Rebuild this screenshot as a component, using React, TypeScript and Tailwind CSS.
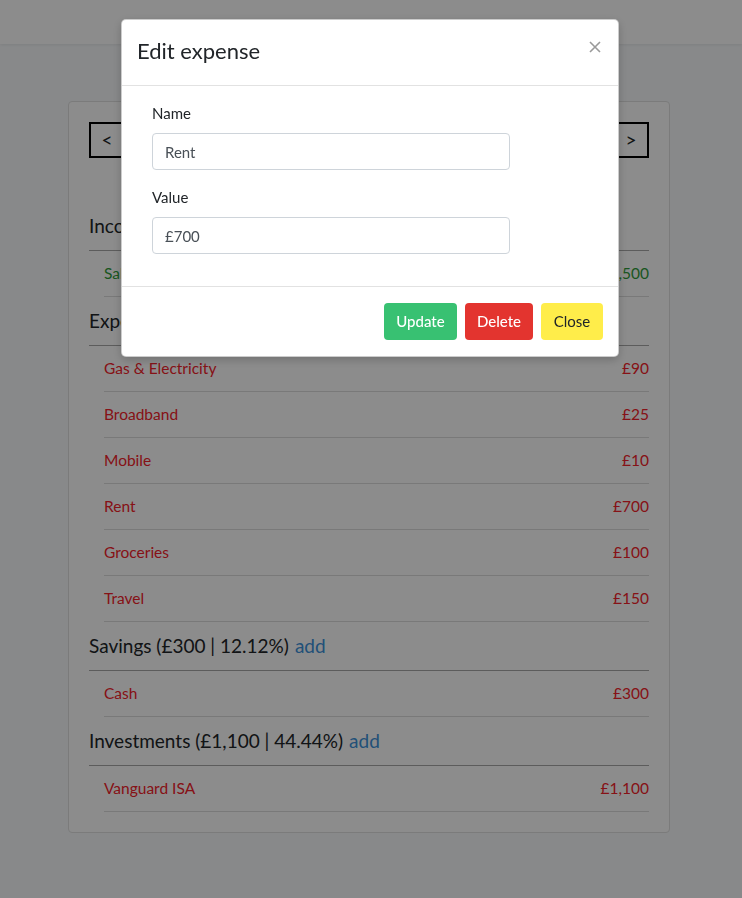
import React from "react";

type Item = { name: string; value: string };

type Section = {
  title: string;
  tone: "income" | "out";
  items: Item[];
};

const sections: Section[] = [
  {
    title: "Income (£2,500)",
    tone: "income",
    items: [{ name: "Salary", value: "£2,500" }],
  },
  {
    title: "Expenses (£1,075 | 43.43%)",
    tone: "out",
    items: [
      { name: "Gas & Electricity", value: "£90" },
      { name: "Broadband", value: "£25" },
      { name: "Mobile", value: "£10" },
      { name: "Rent", value: "£700" },
      { name: "Groceries", value: "£100" },
      { name: "Travel", value: "£150" },
    ],
  },
  {
    title: "Savings (£300 | 12.12%)",
    tone: "out",
    items: [{ name: "Cash", value: "£300" }],
  },
  {
    title: "Investments (£1,100 | 44.44%)",
    tone: "out",
    items: [{ name: "Vanguard ISA", value: "£1,100" }],
  },
];

const SectionBlock = ({ section }: { section: Section }) => {
  return (
    <div>
      <div className="h-[49px] flex items-center border-b border-[#a8a8a8] text-[19px] text-[#212529]">
        <span>{section.title}</span>
        <span className="ml-[6px] text-[#3c92db]">add</span>
      </div>
      {section.items.map((item) => (
        <div
          key={item.name}
          className={
            "ml-[15px] h-[46px] flex items-center justify-between border-b border-[#dcdcdc] text-[15.5px] " +
            (section.tone === "income" ? "text-[#2f9c3a]" : "text-[#f4222a]")
          }
        >
          <span>{item.name}</span>
          <span>{item.value}</span>
        </div>
      ))}
    </div>
  );
};

export default function App() {
  return (
    <div
      className="min-h-screen bg-[#f8fafc]"
      style={{ fontFamily: "Lato, 'Open Sans', sans-serif" }}
    >
      {/* navbar */}
      <div className="h-[44px] bg-white shadow-[0_1px_3px_rgba(0,0,0,0.08)]" />

      {/* budget card */}
      <div className="mt-[57px] ml-[68px] w-[602px] bg-white border border-[#e0e0e0] rounded-[4px] px-[20px] py-[20px]">
        <div className="flex items-center justify-between mb-[44px]">
          <button className="h-[36px] w-[36px] border-2 border-black text-[19px] text-[#212529]">
            &lt;
          </button>
          <span className="text-[19px] text-[#212529]">June 2020</span>
          <button className="h-[36px] w-[36px] border-2 border-black text-[19px] text-[#212529]">
            &gt;
          </button>
        </div>
        {sections.map((s) => (
          <SectionBlock key={s.title} section={s} />
        ))}
      </div>

      {/* modal */}
      <div className="fixed inset-0 bg-black/45">
        <div className="mt-[19px] ml-[121px] w-[498px] bg-white rounded-[5px] border border-black/20 shadow-[0_3px_10px_rgba(0,0,0,0.2)]">
          <div className="flex items-start justify-between pl-[15px] pr-[15px] pt-[16px] pb-[19px] border-b border-[#e2e2e2]">
            <h5 className="text-[22px] leading-[30px] text-[#212529]">Edit expense</h5>
            <button className="mt-[5px] mr-[2px] text-[#9a9a9a]">
              <svg width="12" height="12" viewBox="0 0 12 12" fill="none">
                <path d="M1 1L11 11M11 1L1 11" stroke="currentColor" strokeWidth="1.6" />
              </svg>
            </button>
          </div>
          <div className="px-[30px] py-[16px]">
            <div className="mb-[16px]">
              <label className="block text-[15px] leading-[22px] mb-[9px] text-[#212529]">Name</label>
              <input
                defaultValue="Rent"
                className="block w-[358px] h-[37px] px-[12px] border border-[#ced4da] rounded-[4px] text-[15px] text-[#495057] outline-none"
              />
            </div>
            <div className="mb-[16px]">
              <label className="block text-[15px] leading-[22px] mb-[9px] text-[#212529]">Value</label>
              <input
                defaultValue="£700"
                className="block w-[358px] h-[37px] px-[12px] border border-[#ced4da] rounded-[4px] text-[15px] text-[#495057] outline-none"
              />
            </div>
          </div>
          <div className="flex justify-end gap-[8px] px-[15px] py-[16px] border-t border-[#e2e2e2]">
            <button className="w-[73px] h-[37px] rounded-[4px] bg-[#38c172] text-white text-[15px] font-medium">
              Update
            </button>
            <button className="w-[68px] h-[37px] rounded-[4px] bg-[#e3342f] text-white text-[15px] font-medium">
              Delete
            </button>
            <button className="w-[62px] h-[37px] rounded-[4px] bg-[#ffed4a] text-[#212529] text-[15px]">
              Close
            </button>
          </div>
        </div>
      </div>
    </div>
  );
}
